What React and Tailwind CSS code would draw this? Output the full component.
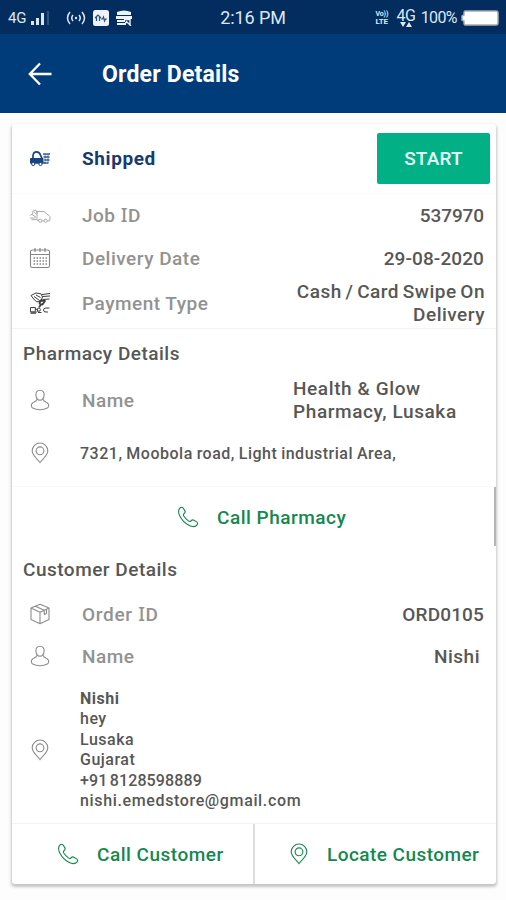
import clsx from "clsx";

const ADDRESS = [
  { text: "hey" },
  { text: "Lusaka" },
  { text: "Gujarat" },
  { text: "+91 8128598889", className: "tracking-[0.15px] [word-spacing:-2px]" },
  { text: "nishi.emedstore@gmail.com", className: "tracking-[0.64px]" },
];

function PinIcon({ className }) {
  return (
    <svg viewBox="0 0 20 22" className={clsx("h-[22px] w-5 shrink-0", className)} fill="none" stroke="currentColor" strokeWidth="1.1">
      <path d="M10 20.6C8.6 18 2.2 13.8 2.2 8.8a7.8 7.8 0 0 1 15.6 0c0 5-6.4 9.200-7.800 11.800z" />
      <circle cx="10" cy="8.800" r="3.900" />
    </svg>
  );
}

function PhoneIcon({ className }) {
  return (
    <svg viewBox="0 0 22 22" className={clsx("size-[22px] shrink-0", className)} fill="none" stroke="currentColor" strokeWidth="1.1" strokeLinejoin="round">
      <path d="M2.300 2.900C3.600.9 5.300.9 6.300 2.300l1.600 2.600c.7 1.200.1 2-.9 2.800-1 .8-.8 1.500-.1 2.500 1.200 1.800 2.700 3.400 4.500 4.700 1.200.9 1.900.9 2.700-.1.8-1 1.700-1.300 2.800-.6l2.700 1.700c1.400.9 1.500 2.400-.1 3.600-2.100 1.700-4.600 1.500-7.700-.2C7.900 17.200 4.600 13.500 2.800 10 1.300 7 1.200 4.800 2.300 2.900z" />
    </svg>
  );
}

function UserIcon() {
  return (
    <svg viewBox="0 0 20 22" className="h-[22px] w-5 text-[#8c8c8c]" fill="none" stroke="currentColor" strokeWidth="1.1" strokeLinejoin="round">
      <path d="M10 1.200c2.800 0 4.300 2 4.100 4.700-.2 2.700-1.600 5.300-4.100 5.300S6.100 8.600 5.900 5.900C5.700 3.200 7.200 1.200 10 1.200z" />
      <path d="M6.800 10.300c-.3 2-1.800 2.300-3.200 2.900-2.600 1-3.100 4.700-.9 5.900 4 2.100 10.600 2.100 14.600 0 2.200-1.200 1.700-4.900-.9-5.900-1.400-.6-2.900-.9-3.200-2.900" />
    </svg>
  );
}

function BoxIcon() {
  return (
    <svg viewBox="0 0 22 22" className="size-[22px] text-[#8c8c8c]" fill="none" stroke="currentColor" strokeWidth="1.100" strokeLinejoin="round">
      <path d="M11 1.300 20 5v11.500l-9 4.200-9-4.200V5zM2 5l9 4.200L20 5M11 9.200v11.500M6.300 3.200l9 4.100v4.200l2.200-1V6" />
    </svg>
  );
}

function CalendarIcon() {
  return (
    <svg viewBox="0 0 22 22" className="size-[22px] text-[#858585]" fill="none" stroke="currentColor">
      <rect x="1.500" y="3" width="19" height="17.500" rx="1.800" strokeWidth="1.100" />
      <path d="M2 7.500h18" />
      <path d="M6 1v4M11 1v4M16 1v4" strokeWidth="1.200" />
      <path d="M4.500 11h14M4.500 14h14M4.500 17h14" strokeWidth="1.600" strokeDasharray="1.500 1.500" />
    </svg>
  );
}

function TruckIcon() {
  return (
    <svg viewBox="0 0 22 18" className="h-[18px] w-[22px] text-[#174580]" fill="none" stroke="currentColor">
      <path d="M1.500 8.500h12.500v4.700H1.500z" fill="currentColor" />
      <path d="M4 9.500V5.500Q4.500 1.900 7.500 1.900t4 3.200l2 4.400" strokeWidth="1.700" />
      <path d="M14 4h7M14.500 7h6M15.500 10h5M14 13h5.500" strokeWidth="1.600" opacity=".85" />
      <path d="M16 4v10M19 4v9" strokeWidth="1" opacity=".6" />
      <circle cx="4.200" cy="14" r="1.600" fill="#fff" />
      <circle cx="11.500" cy="14" r="1.600" fill="#fff" />
    </svg>
  );
}

function JobIcon() {
  return (
    <svg viewBox="0 0 22 16" className="h-4 w-[22px] text-[#a3a3a3]" fill="none" stroke="currentColor" strokeWidth=".9" strokeLinejoin="round">
      <path d="M8 3.500h6q2.300 0 3.700 2.500l2.300 1.500q1.300.8 1 2.500l-.3 2.800h-2.200M8 3.500v8.800h1.800M12.800 12.900h2.400" />
      <path d="M8.500 5.500 6.800 2 4 2.900 3.600 5.700 1.300 7.500M4.800 3.700l3.400 3.200M1 10h5.500M2.500 11.700h5M3 6.500l4 2.700" />
      <circle cx="11.200" cy="12.700" r="1.600" />
      <circle cx="16.700" cy="12.700" r="1.600" />
    </svg>
  );
}

function PaymentIcon() {
  return (
    <svg viewBox="0 0 22 22" className="size-[22px] text-[#3d3d3d]" fill="none" stroke="currentColor" strokeWidth="1" strokeLinejoin="round">
      <path d="M2 3.500 7 1l5 .8 1.500 3.200-1.700 4.300-4 .5-2.500-2zM5 4.500l5.500 4M7 3l4.500 2.500M13 2.500l8-1M13.500 4.500 21 4M13.500 7.500l7-.5" />
      <path d="m11.500 8.500 4.500.5-2.500 3.500-3-.8zM12.500 12l-2.500 3.300" strokeWidth="1.800" />
      <path d="M1.500 15.500h4.800v4.300H1.500zM6 16.500l3 1.500-1.500 2.500M9 20.500h3.500M20.500 16h-3.500q-2.500 0-2.500 2t2.500 2h2" />
      <circle cx="9.800" cy="17.700" r="1.600" />
      <path d="M1.500 21H7" strokeWidth="1.500" />
    </svg>
  );
}

// capital I with serifs, as in the app's typeface
function SerifI() {
  return <span className="font-['Noto_Sans']">I</span>;
}

function Row({ icon, label, children, className }) {
  return (
    <div className={clsx("flex items-center", className)}>
      <div className="flex w-[55px] shrink-0 justify-center">{icon}</div>
      <div className="ml-[15px] flex-1 text-[#929292]">{label}</div>
      {children}
    </div>
  );
}

function StatusBar() {
  return (
    <div className="flex h-[34px] items-center justify-between bg-[#032d5f] px-2 pt-0.5 text-[#dce7f2]">
      <div className="flex w-[162px] items-center">
        <span className="text-[15px] leading-none tracking-[-0.3px]">4G</span>
        <svg viewBox="0 0 20 16" className="ml-1 h-4 w-5" fill="currentColor">
          <path d="M1 11h3v4H1zM6 8h3v7H6zM11 3h3v12h-3z" />
          <path d="M17 1h2v14h-2z" opacity=".2" />
        </svg>
        <svg viewBox="0 0 20 14" className="ml-4 h-[14px] w-5" fill="none" stroke="currentColor" strokeWidth="1.500">
          <path d="M4 1Q-1 7 4 13M16 1q5 6 0 12M7 4q-2.500 3 0 6M13 4q2.500 3 0 6" />
          <circle cx="10" cy="7" r="1.200" fill="currentColor" stroke="none" />
        </svg>
        <svg viewBox="0 0 16 16" className="ml-[7px] size-4">
          <rect width="16" height="16" rx="2.500" fill="#edf3fa" />
          <path d="m2 8 3-3 3 3M3.500 7v4M6.500 6.500V11M8 9h1.500l1-2 1 4 1-2H14" fill="none" stroke="#315079" strokeWidth="1.200" />
        </svg>
        <svg viewBox="0 0 16 16" className="ml-[7px] size-4" fill="#edf3fa">
          <path d="M1 2q7-3 14 0v3H1zM0 6h16v3H0zM1 10h8v2H1zM1 13h9v2H1z" />
          <path d="M8 9.500h6v5M9 14l2-3M11 12l4 4" fill="none" stroke="#edf3fa" strokeWidth="1.400" />
        </svg>
      </div>
      <div className="text-center text-[18px] leading-none tracking-[-0.1px]">2:16 PM</div>
      <div className="flex w-[162px] items-center justify-end">
        <div className="mr-[5px] flex w-4 flex-col text-[7px] leading-[8px] font-bold tracking-[-0.1px]">
          <span>Vo))</span>
          <span className="text-[8px]">LTE</span>
        </div>
        <div className="mr-[5px] flex flex-col items-center">
          <span className="text-[16px] leading-[13px] tracking-[-0.300px]">4G</span>
          <svg viewBox="0 0 12 5" className="h-[5px] w-3" fill="currentColor">
            <path d="M0 0h6L3 5zM6 5h6L9 0z" />
          </svg>
        </div>
        <span className="text-[16px] leading-none tracking-[-0.600px]">100%</span>
        <svg viewBox="0 0 38 16" className="-mr-px ml-1 h-4 w-[38px]">
          <path d="M4 1h31q2 0 2 2v10q0 2-2 2H4q-1 0-1-2v-2L1 10V6l2-1V3q0-2 1-2z" fill="#fff" stroke="#a9adb0" strokeWidth="1.500" />
        </svg>
      </div>
    </div>
  );
}

export default function App() {
  return (
    <div className="h-[900px] w-[506px] overflow-hidden bg-[#fdfdfd] font-['Roboto',sans-serif]">
      <StatusBar />
      <header className="flex h-[79px] items-center bg-[#003c7a] pl-7 text-white">
        <svg viewBox="0 0 24 24" className="size-6" fill="none" stroke="currentColor" strokeWidth="2.300">
          <path d="M23.500 12H2M12 1.500 1.800 12 12 22.500" />
        </svg>
        <h1 className="ml-[50px] pt-[3px] text-[23px] leading-7 font-bold tracking-[0.2px]">Order Details</h1>
      </header>

      <main className="relative mx-3 mt-[11px] h-[760px] w-[484px] rounded-[3px] bg-white text-[19px] leading-[23px] font-medium tracking-[0.5px] text-[#575757] shadow-[0_2px_3px_1px_rgba(0,0,0,0.22)]">
        <Row
          icon={<TruckIcon />}
          label={<span className="text-[19px] font-bold tracking-[0.600px] text-[#163b70]">Shipped</span>}
          className="h-[70px] border-b border-[#f9f9f9]"
        >
          <button className="mr-1.5 h-[51px] w-[113px] rounded-[2px] bg-[#02b086] text-[19px] font-medium tracking-[0.200px] text-[#e9fff8]">START</button>
        </Row>
        <Row icon={<JobIcon />} label={<>Job <SerifI />D</>} className="h-[43px] pr-3">
          <span className="tracking-[-0.1px]">537970</span>
        </Row>
        <Row icon={<CalendarIcon />} label="Delivery Date" className="h-[42px] pr-3">
          <span className="tracking-[0.1px]">29-08-2020</span>
        </Row>
        <Row
          icon={<PaymentIcon />}
          label={<span className="relative top-px">Payment Type</span>}
          className="h-[50px] border-b border-[#f3f3f3] pr-[11px] pb-0.5"
        >
          <div className="text-right [word-spacing:-1.5px]">
            Cash / Card Swipe On
            <br />
            Delivery
          </div>
        </Row>

        <h2 className="h-[47px] pt-[13px] pl-[11px]">Pharmacy Details</h2>
        <Row icon={<UserIcon />} label="Name" className="h-[50px] pb-0.5">
          <div className="w-[203px] tracking-[0.600px]">
            Health &amp; Glow
            <br />
            Pharmacy, Lusaka
          </div>
        </Row>
        <div className="flex h-[61px] items-center border-b border-[#f8f8f8] pb-1.5 text-[16px]">
          <div className="flex w-[55px] justify-center">
            <PinIcon className="text-[#8c8c8c]" />
          </div>
          <div className="ml-[13px] tracking-[0.500px] [word-spacing:-0.600px]">7321, Moobola road, Light industrial Area,</div>
        </div>
        <button className="flex h-[60px] w-full items-center pl-[165px] text-[#15874f]">
          <PhoneIcon />
          <span className="ml-[18px]">Call Pharmacy</span>
        </button>

        <h2 className="h-[46px] pt-[11px] pl-[11px]">Customer Details</h2>
        <Row icon={<BoxIcon />} label={<span className="tracking-[0.700px]">Order <SerifI />D</span>} className="h-[42px] pr-3">
          <span className="tracking-[0.15px]">ORD0105</span>
        </Row>
        <Row icon={<UserIcon />} label="Name" className="h-[42px] pr-4">
          Nishi
        </Row>
        <div className="flex h-[147px] items-center border-b border-[#f3f3f3] text-[16px] leading-[20.500px]">
          <div className="flex w-[55px] justify-center">
            <PinIcon className="text-[#8c8c8c]" />
          </div>
          <div className="ml-[13px]">
            <div className="font-bold">Nishi</div>
            {ADDRESS.map((line) => (
              <div key={line.text} className={line.className}>{line.text}</div>
            ))}
          </div>
        </div>
        <div className="flex h-[60px] text-[#15874f]">
          <button className="flex w-[243px] items-center border-r-2 border-[#dddddd] pl-[45px]">
            <PhoneIcon />
            <span className="ml-[18px]">Call Customer</span>
          </button>
          <button className="flex flex-1 items-center pl-[34px]">
            <PinIcon />
            <span className="ml-[18px] tracking-[0.450px]">Locate Customer</span>
          </button>
        </div>
        {/* scroll thumb */}
        <div className="absolute top-[363px] right-0 h-[59px] w-[2px] bg-[#b5b5b5]" />
      </main>
    </div>
  );
}
